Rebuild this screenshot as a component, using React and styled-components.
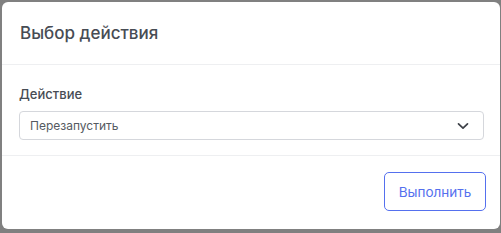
import React from 'react'
import styled, { createGlobalStyle } from 'styled-components'

const GlobalStyle = createGlobalStyle`
  html, body {
    margin: 0;
    padding: 0;
    background: #808080;
    font-family: 'Inter', 'Noto Sans', sans-serif;
  }
`

const Backdrop = styled.div`
  width: 501px;
  height: 233px;
  padding: 2px 1px 0 2px;
  box-sizing: border-box;
`

const Modal = styled.div`
  width: 498px;
  height: 227px;
  background: #fff;
  border-radius: 6px;
  display: flex;
  flex-direction: column;
  overflow: hidden;
`

const Header = styled.div`
  height: 63px;
  display: flex;
  align-items: center;
  padding: 0 19px 0 18px;
  border-bottom: 1px solid #eeeff1;
  box-sizing: border-box;
`

const Title = styled.h2`
  margin: 0;
  font-size: 17px;
  font-weight: 500;
  color: #474c54;
`

const Body = styled.div`
  height: 91px;
  padding: 21px 16px 0 17px;
  border-bottom: 1px solid #eeeff1;
  box-sizing: border-box;
`

const Label = styled.div`
  font-size: 13px;
  font-weight: 500;
  color: #474c54;
  margin-bottom: 9px;
  line-height: 16px;
`

const Select = styled.div`
  height: 29px;
  border: 1px solid #d5d7dc;
  border-radius: 4px;
  display: flex;
  align-items: center;
  justify-content: space-between;
  padding: 0 14px 0 10px;
  box-sizing: border-box;
  font-size: 12px;
  color: #555a61;
`

const Footer = styled.div`
  flex: 1;
  display: flex;
  justify-content: flex-end;
  align-items: flex-start;
  padding: 16px 14px 0 0;
`

const Button = styled.button`
  width: 102px;
  height: 39px;
  background: #fff;
  border: 1px solid #5570ee;
  border-radius: 5px;
  color: #5570ee;
  font-family: 'Inter', 'Noto Sans', sans-serif;
  font-size: 13.5px;
  cursor: pointer;
`

const App = () => (
  <Backdrop>
    <GlobalStyle />
    <Modal>
      <Header>
        <Title>Выбор действия</Title>
      </Header>
      <Body>
        <Label>Действие</Label>
        <Select>
          <span>Перезапустить</span>
          <svg width="12" height="8" viewBox="0 0 12 8" fill="none">
            <path d="M1.5 1.8 6 6.2l4.5-4.4" stroke="#3d4148" strokeWidth="1.7" strokeLinecap="round" strokeLinejoin="round" />
          </svg>
        </Select>
      </Body>
      <Footer>
        <Button>Выполнить</Button>
      </Footer>
    </Modal>
  </Backdrop>
)

export default App
